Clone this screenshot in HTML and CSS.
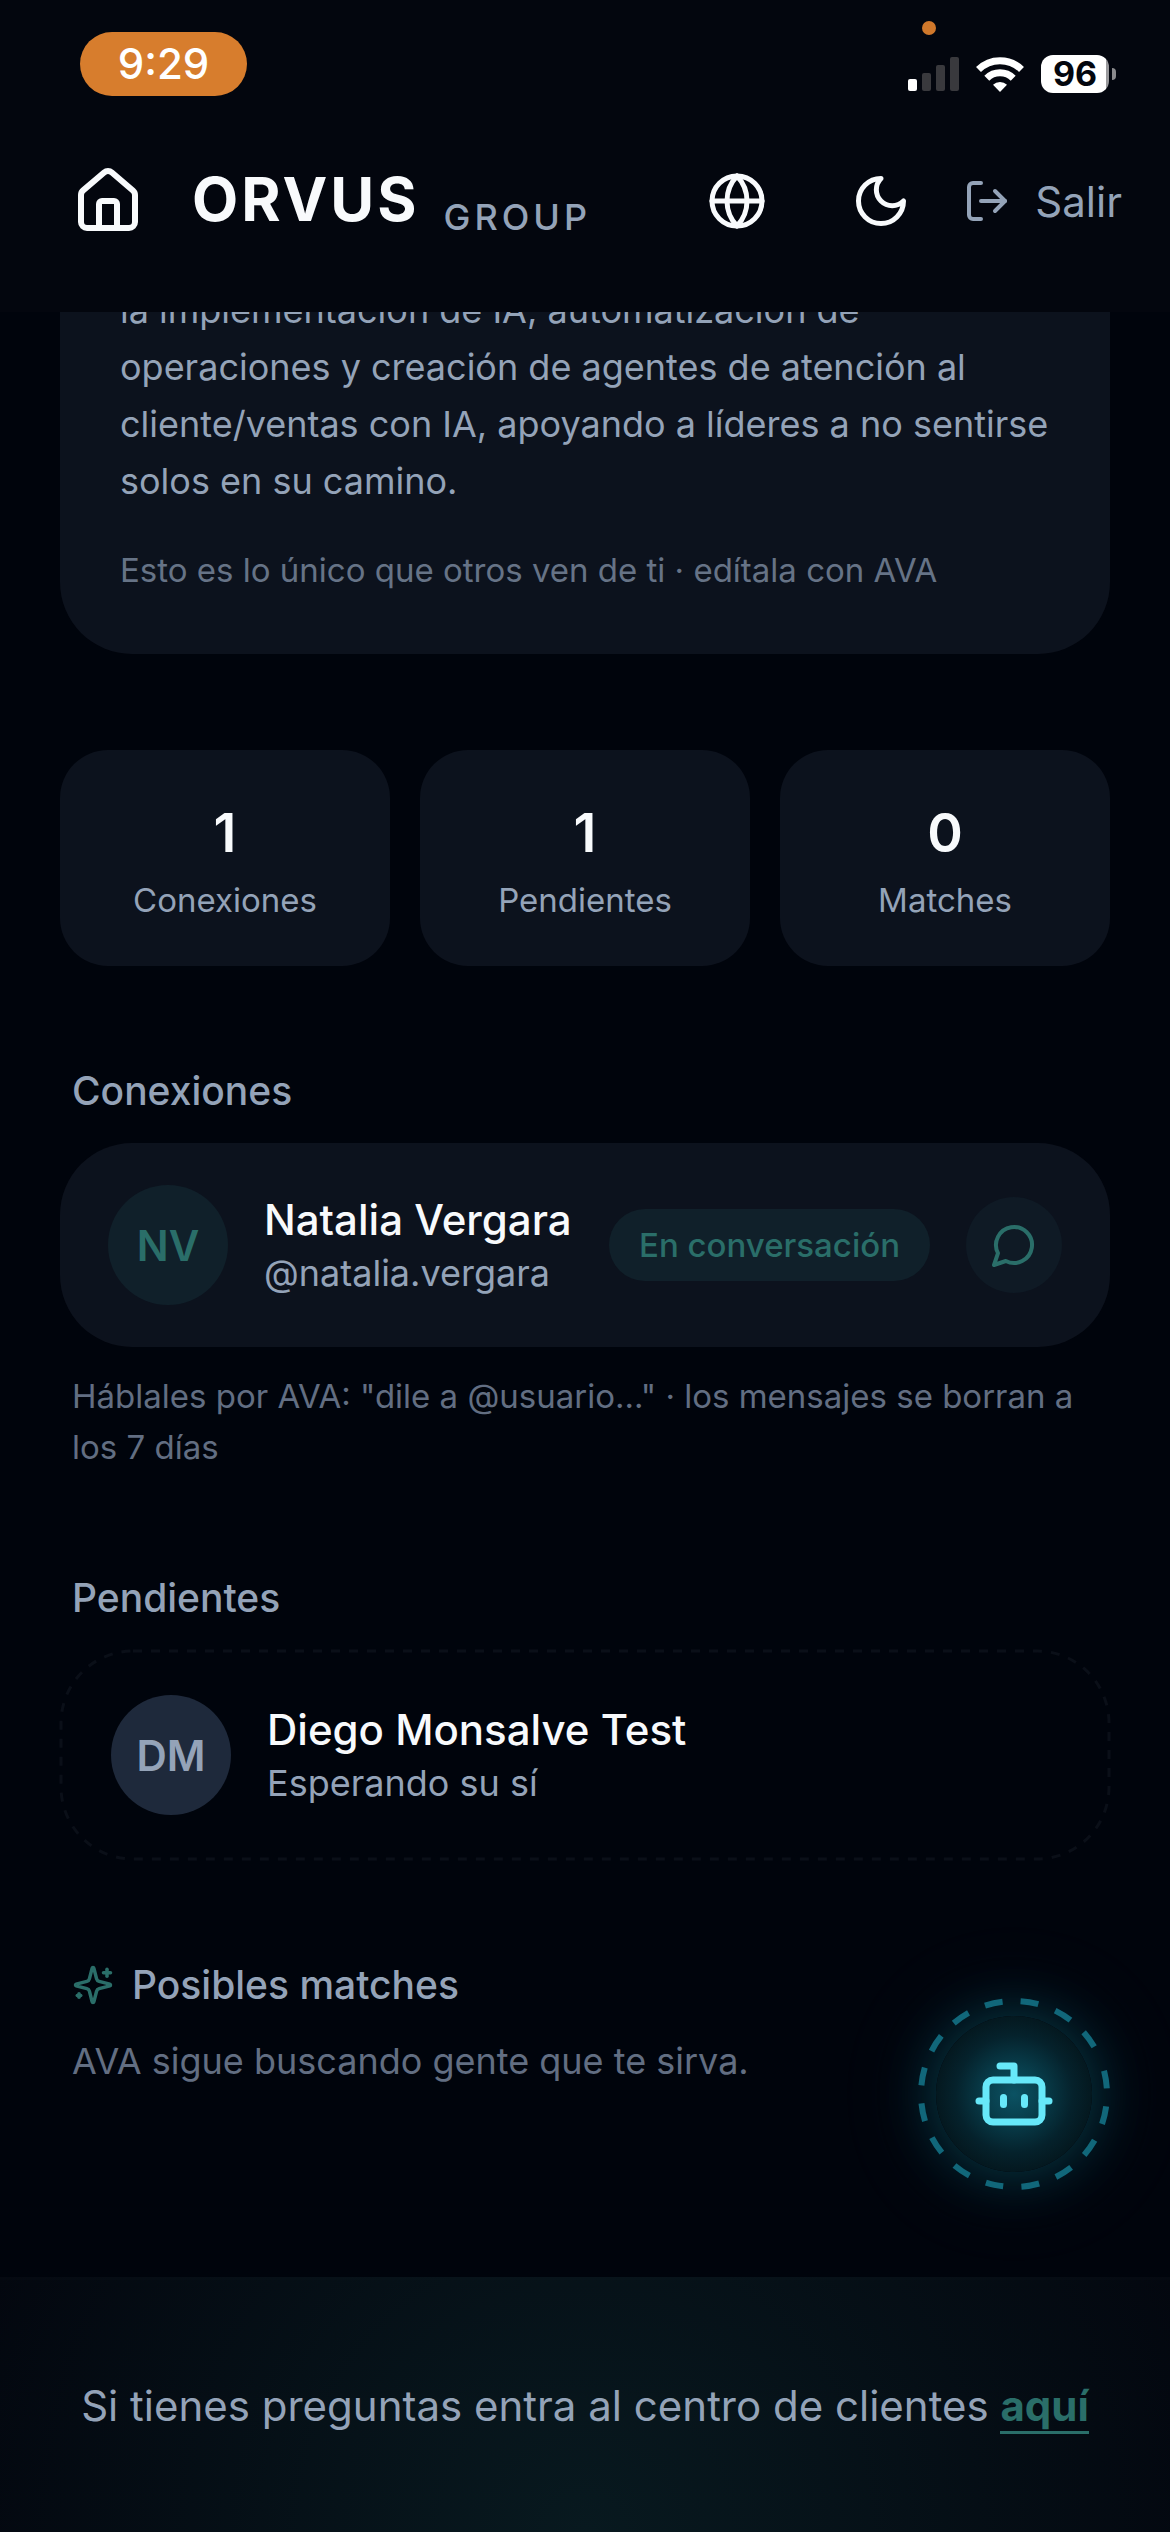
FILE: index.html
```html
<!DOCTYPE html>
<html lang="es">
<head>
    <meta charset="UTF-8">
    <meta name="viewport" content="width=device-width, initial-scale=1.0">
    <title>Orvus Group</title>
    <link rel="stylesheet" href="styles.css">
</head>
<body>
    <header class="header">
        <!-- Barra de estado -->
        <div class="status">
            <span class="status-time">9:29</span>
            <span class="status-dot"></span>
            <div class="status-icons">
                <svg class="signal" viewBox="0 0 51 34">
                    <rect x="0" y="22" width="9" height="12" rx="2" fill="#fff"/>
                    <rect x="14" y="16" width="9" height="18" rx="2" fill="#39393d"/>
                    <rect x="28" y="8" width="9" height="26" rx="2" fill="#39393d"/>
                    <rect x="42" y="0" width="9" height="34" rx="2" fill="#39393d"/>
                </svg>
                <svg class="wifi" viewBox="0 0 48 36" fill="none" stroke="#fff" stroke-width="7">
                    <path d="M2.5 13.5a30.5 30.5 0 0 1 43 0"/>
                    <path d="M10.8 22.2a18.8 18.8 0 0 1 26.4 0"/>
                    <path d="M24 36l-7-7.2a10 10 0 0 1 14 0z" fill="#fff" stroke="none"/>
                </svg>
                <div class="battery"><span class="battery-level">96</span></div>
            </div>
        </div>

        <!-- Navegación -->
        <nav class="nav">
            <a class="home" href="#" aria-label="Inicio">
                <svg class="icon icon-xl" viewBox="0 0 24 24">
                    <path d="M15 21v-8a1 1 0 0 0-1-1h-4a1 1 0 0 0-1 1v8"/>
                    <path d="M3 10a2 2 0 0 1 .709-1.528l7-5.999a2 2 0 0 1 2.582 0l7 5.999A2 2 0 0 1 21 10v9a2 2 0 0 1-2 2H5a2 2 0 0 1-2-2z"/>
                </svg>
            </a>
            <a class="brand" href="#">
                <span class="brand-name">ORVUS</span>
                <span class="brand-sub">GROUP</span>
            </a>
            <div class="actions">
                <button class="icon-btn" aria-label="Idioma">
                    <svg class="icon icon-lg" viewBox="0 0 24 24">
                        <circle cx="12" cy="12" r="10"/>
                        <path d="M12 2a14.5 14.5 0 0 0 0 20 14.5 14.5 0 0 0 0-20"/>
                        <path d="M2 12h20"/>
                    </svg>
                </button>
                <button class="icon-btn" aria-label="Tema">
                    <svg class="icon icon-lg" viewBox="0 0 24 24">
                        <path d="M12 3a6 6 0 0 0 9 9 9 9 0 1 1-9-9Z"/>
                    </svg>
                </button>
                <button class="logout">
                    <svg class="icon icon-md" viewBox="0 0 24 24">
                        <path d="M9 21H5a2 2 0 0 1-2-2V5a2 2 0 0 1 2-2h4"/>
                        <path d="m16 17 5-5-5-5"/>
                        <path d="M21 12H9"/>
                    </svg>
                    Salir
                </button>
            </div>
        </nav>
    </header>

    <main class="main">
        <section class="bio">
            <p class="bio-text">la implementación de IA, automatización de operaciones y creación de agentes de atención al cliente/ventas con IA, apoyando a líderes a no sentirse solos en su camino.</p>
            <p class="bio-note">Esto es lo único que otros ven de ti · edítala con AVA</p>
        </section>

        <section class="stats">
            <div class="stat">
                <div class="stat-value">1</div>
                <div class="stat-label">Conexiones</div>
            </div>
            <div class="stat">
                <div class="stat-value">1</div>
                <div class="stat-label">Pendientes</div>
            </div>
            <div class="stat">
                <div class="stat-value">0</div>
                <div class="stat-label">Matches</div>
            </div>
        </section>

        <section class="section">
            <h2 class="section-title">Conexiones</h2>
            <div class="person">
                <div class="avatar avatar-teal">NV</div>
                <div class="person-info">
                    <div class="person-name">Natalia Vergara</div>
                    <div class="person-sub">@natalia.vergara</div>
                </div>
                <span class="pill">En conversación</span>
                <button class="chat-btn" aria-label="Abrir chat">
                    <svg class="icon icon-md" viewBox="0 0 24 24">
                        <path d="M7.9 20A9 9 0 1 0 4 16.1L2 22Z"/>
                    </svg>
                </button>
            </div>
            <p class="hint">Háblales por AVA: "dile a @usuario..." · los mensajes se borran a los 7 días</p>
        </section>

        <section class="section">
            <h2 class="section-title">Pendientes</h2>
            <div class="person person-pending">
                <svg class="dashes"><rect width="100%" height="100%" rx="72"/></svg>
                <div class="avatar">DM</div>
                <div class="person-info">
                    <div class="person-name">Diego Monsalve Test</div>
                    <div class="person-sub">Esperando su sí</div>
                </div>
            </div>
        </section>

        <section class="section">
            <h2 class="section-title">
                <svg class="icon icon-sm" viewBox="0 0 24 24">
                    <path d="M9.937 15.5A2 2 0 0 0 8.5 14.063l-6.135-1.582a.5.5 0 0 1 0-.962L8.5 9.936A2 2 0 0 0 9.937 8.5l1.582-6.135a.5.5 0 0 1 .963 0L14.063 8.5A2 2 0 0 0 15.5 9.937l6.135 1.581a.5.5 0 0 1 0 .964L15.5 14.063a2 2 0 0 0-1.437 1.437l-1.582 6.135a.5.5 0 0 1-.963 0z"/>
                    <path d="M20 3v4"/>
                    <path d="M22 5h-4"/>
                    <path d="M4 17v2"/>
                    <path d="M5 18H3"/>
                </svg>
                Posibles matches
            </h2>
            <p class="empty">AVA sigue buscando gente que te sirva.</p>
        </section>
    </main>

    <footer class="footer">
        <p class="footer-text">Si tienes preguntas entra al centro de clientes <a class="footer-link" href="#">aquí</a></p>
    </footer>

    <!-- Botón flotante de AVA -->
    <button class="ava" aria-label="Hablar con AVA">
        <svg class="ava-ring" viewBox="0 0 192 192">
            <path d="M189 96A93 93 0 1 1 187.6 79.9" transform="rotate(-14.5 96 96)"/>
        </svg>
        <span class="ava-core">
            <svg class="icon ava-icon" viewBox="0 0 24 24">
                <path d="M12 8V4H8"/>
                <rect width="16" height="12" x="4" y="8" rx="2"/>
                <path d="M2 14h2"/>
                <path d="M20 14h2"/>
                <path d="M15 13v2"/>
                <path d="M9 13v2"/>
            </svg>
        </span>
    </button>
</body>
</html>
```
FILE: styles.css
```css
* {
    box-sizing: border-box;
}

body {
    display: flex;
    flex-direction: column;
    min-height: 100vh;
    margin: 0;
    background-color: #00040c;
    color: #f8fafc;
    font-family: Inter, "Liberation Sans", sans-serif;
    font-size: 36px;
}

h2,
p {
    margin: 0;
}

a {
    color: inherit;
    text-decoration: none;
}

button {
    padding: 0;
    border: none;
    background: none;
    color: inherit;
    font: inherit;
    cursor: pointer;
}

/* Iconos */
.icon {
    display: block;
    flex: none;
    fill: none;
    stroke: currentColor;
    stroke-width: 2;
    stroke-linecap: round;
    stroke-linejoin: round;
}

.icon-sm {
    width: 42px;
    height: 42px;
}

.icon-md {
    width: 48px;
    height: 48px;
}

.icon-lg {
    width: 60px;
    height: 60px;
}

.icon-xl {
    width: 72px;
    height: 72px;
}

/* Cabecera */
.header {
    position: sticky;
    top: 0;
    z-index: 10;
    padding: 32px 48px 45px 72px;
    background-color: #03060e;
}

.status {
    display: flex;
    justify-content: space-between;
    align-items: flex-start;
    position: relative;
    padding: 0 6px 0 8px;
}

.status-time {
    width: 167px;
    border-radius: 32px;
    background-color: #d77d2d;
    color: #fff;
    font-size: 42px;
    font-weight: 500;
    line-height: 64px;
    text-align: center;
}

.status-dot {
    position: absolute;
    top: -11px;
    right: 186px;
    width: 14px;
    height: 14px;
    border-radius: 50%;
    background-color: #d0782b;
}

.status-icons {
    display: flex;
    align-items: center;
    gap: 17px;
    padding-top: 23px;
}

.signal {
    width: 51px;
    height: 34px;
}

.wifi {
    width: 48px;
    height: 36px;
}

.battery {
    display: flex;
    align-items: center;
    gap: 3px;
}

.battery::after {
    content: "";
    width: 4px;
    height: 12px;
    border-radius: 0 4px 4px 0;
    background-color: #8a8a8d;
}

.battery-level {
    width: 68px;
    border-radius: 12px;
    background: linear-gradient(to right, #fff 96%, #9a9a9d 96%);
    color: #03060e;
    font-size: 34px;
    font-weight: 700;
    line-height: 38px;
    text-align: center;
}

.nav {
    display: flex;
    align-items: center;
    margin-top: 39px;
    height: 132px;
}

.brand {
    display: flex;
    align-items: flex-start;
    gap: 24px;
    margin-left: 48px;
}

.brand-name {
    font-size: 60px;
    font-weight: 700;
    letter-spacing: 3px;
}

.brand-sub {
    padding-top: 32px;
    color: #94a3b8;
    font-size: 36px;
    font-weight: 500;
    letter-spacing: 4px;
}

.actions {
    display: flex;
    align-items: center;
    margin-left: auto;
}

.icon-btn {
    display: flex;
    justify-content: center;
    align-items: center;
    width: 144px;
    height: 132px;
}

.logout {
    display: flex;
    align-items: center;
    gap: 24px;
    margin-left: 10px;
    color: #94a3b8;
    font-size: 42px;
}

/* Contenido */
.main {
    flex: 1;
    padding: 0 60px;
}

.bio {
    margin-top: -30px;
    padding: 0 60px 60px;
    border-radius: 0 0 72px 72px;
    background-color: #0c121d;
}

.bio-text {
    color: #94a3b8;
    line-height: 57px;
}

.bio-note {
    margin-top: 36px;
    color: #667386;
    font-size: 33px;
    line-height: 48px;
}

.stats {
    display: grid;
    grid-template-columns: repeat(3, 1fr);
    gap: 30px;
    margin-top: 96px;
}

.stat {
    padding: 42px 24px;
    border-radius: 48px;
    background-color: #0c121d;
    text-align: center;
}

.stat-value {
    font-size: 54px;
    font-weight: 600;
    line-height: 81px;
}

.stat-label {
    margin-top: 3px;
    color: #94a3b8;
    font-size: 33px;
    line-height: 48px;
}

.section {
    margin-top: 96px;
}

.section-title {
    display: flex;
    align-items: center;
    gap: 18px;
    margin-bottom: 24px;
    padding: 0 12px;
    color: #94a3b8;
    font-size: 39px;
    font-weight: 500;
    line-height: 57px;
}

.section-title .icon {
    color: #2a6e69;
}

.person {
    display: flex;
    align-items: center;
    gap: 36px;
    padding: 42px 48px;
    border-radius: 72px;
    background-color: #0c121d;
}

.person-pending {
    position: relative;
    border: 3px solid transparent;
    background: none;
}

.dashes {
    position: absolute;
    top: -2px;
    left: -2px;
    width: calc(100% + 4px);
    height: calc(100% + 4px);
    overflow: visible;
    fill: none;
    stroke: #0a0f18;
    stroke-width: 3;
    stroke-dasharray: 9 9;
}

.avatar {
    display: flex;
    justify-content: center;
    align-items: center;
    flex: none;
    width: 120px;
    height: 120px;
    border-radius: 50%;
    background-color: #1e293b;
    color: #94a3b8;
    font-size: 42px;
    font-weight: 600;
}

.avatar-teal {
    background-color: #10202a;
    color: #2a6e69;
}

.person-info {
    flex: 1;
    min-width: 0;
    white-space: nowrap;
}

.person-name {
    font-size: 42px;
    font-weight: 500;
    line-height: 57px;
}

.person-sub {
    color: #94a3b8;
    line-height: 51px;
}

.pill {
    padding: 0 30px;
    border-radius: 36px;
    background-color: #10202a;
    color: #2a6e69;
    font-size: 33px;
    font-weight: 500;
    line-height: 72px;
    white-space: nowrap;
}

.chat-btn {
    display: flex;
    justify-content: center;
    align-items: center;
    flex: none;
    width: 96px;
    height: 96px;
    border-radius: 50%;
    background-color: #0f1a25;
    color: #2a6e69;
}

.hint {
    margin-top: 24px;
    padding: 0 12px;
    color: #626e82;
    font-size: 33px;
    line-height: 51px;
}

.empty {
    padding: 0 12px;
    color: #626e82;
    line-height: 48px;
}

/* Pie */
.footer {
    margin-top: 192px;
    padding: 96px 60px;
    border-top: 3px solid rgba(255, 255, 255, 0.01);
    background: radial-gradient(ellipse 55% 250% at 50% 100%, #08191f, #03070f) border-box;
    text-align: center;
}

.footer-text {
    color: #94a3b8;
    font-size: 42px;
    line-height: 60px;
}

.footer-link {
    border-bottom: 3px solid #2a6e69;
    color: #2a6e69;
    font-weight: 700;
}

/* AVA */
.ava {
    display: flex;
    justify-content: center;
    align-items: center;
    position: fixed;
    right: 60px;
    bottom: 342px;
    width: 192px;
    height: 192px;
    border-radius: 50%;
}

.ava-ring {
    position: absolute;
    inset: 0;
    fill: none;
    stroke: #11677a;
    stroke-width: 6;
    stroke-dasharray: 18 18;
}

.ava-core {
    display: flex;
    justify-content: center;
    align-items: center;
    width: 156px;
    height: 156px;
    border-radius: 50%;
    background: radial-gradient(closest-side, #0b5263 0%, #083e4c 35%, #05222c 75%, #04181f 100%);
    box-shadow: 0 0 60px rgba(34, 211, 238, 0.25), 0 0 120px rgba(34, 211, 238, 0.1);
}

.ava-icon {
    width: 84px;
    height: 84px;
    color: #67e8f9;
}
```
